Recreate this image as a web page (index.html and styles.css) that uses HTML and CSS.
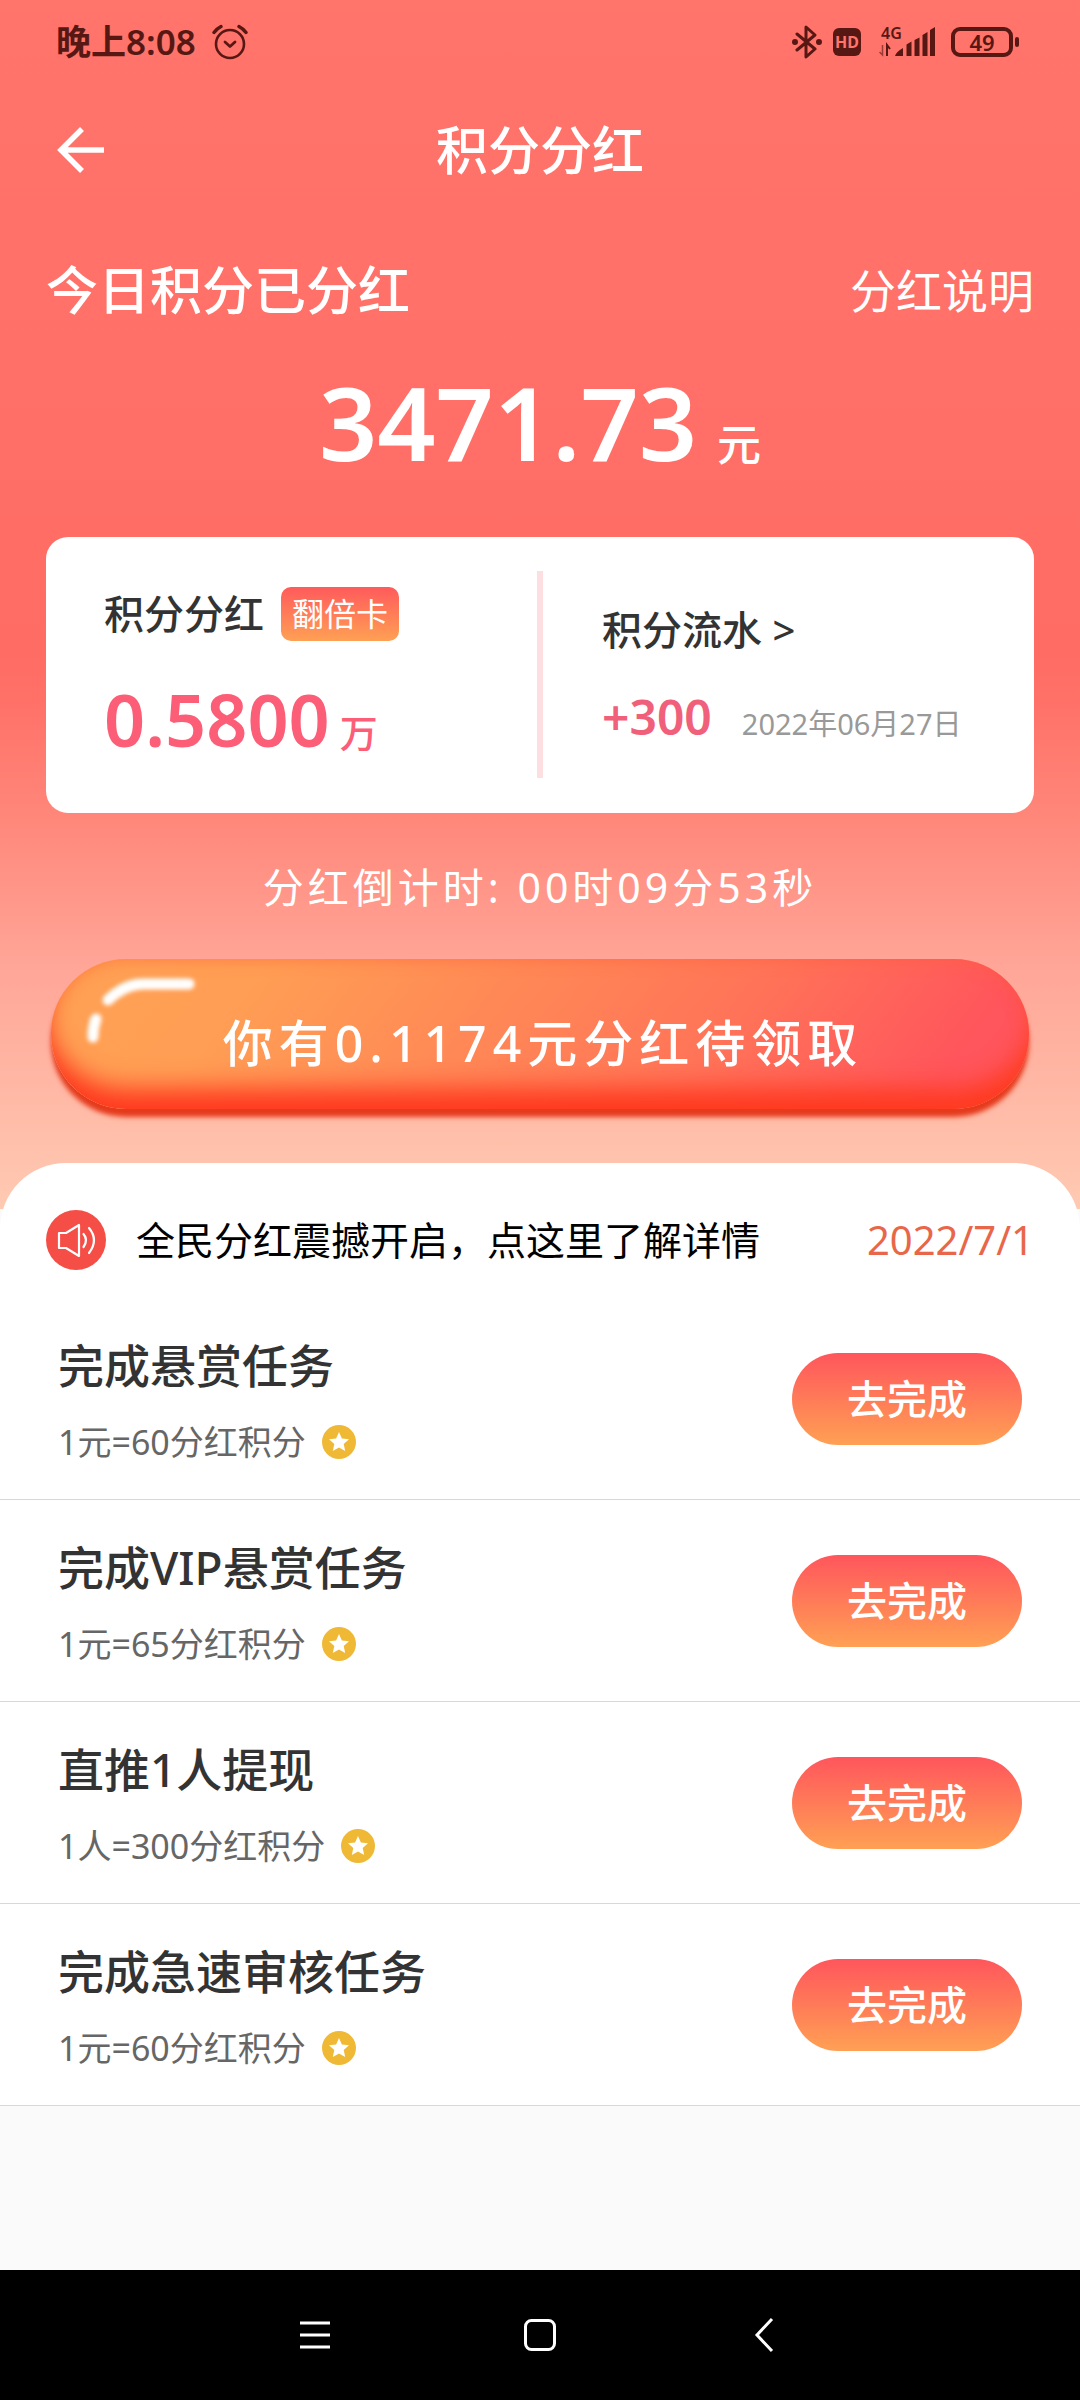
FILE: index.html
```html
<!DOCTYPE html>
<html lang="zh-CN">
<head>
<meta charset="utf-8">
<meta name="viewport" content="width=device-width, initial-scale=1">
<title>积分分红</title>
<link rel="stylesheet" href="styles.css">
</head>
<body>
<div class="page">
  <div class="hero">
    <div class="status">
      <span class="status-time">晚上8:08</span>
      <svg class="alarm" width="36" height="36" viewBox="0 0 36 36" fill="none" stroke="currentColor" stroke-linecap="round" stroke-linejoin="round">
        <circle cx="18" cy="20" r="14" stroke-width="2.6"/>
        <path d="M13 18l5 4.500 5-4.500" stroke-width="2.800"/>
        <path d="M2 8.500q3-4 7-6M34 8.500q-3-4-7-6" stroke-width="3.400"/>
      </svg>
      <div class="status-right">
        <svg width="30" height="34" viewBox="0 0 30 34" fill="none" stroke="currentColor" stroke-width="3" stroke-linejoin="round" stroke-linecap="round">
          <path d="M5 9l18 15-9 8V2l9 8L5 25"/>
          <circle cx="3" cy="17" r="1.500" fill="currentColor"/><circle cx="27" cy="17" r="1.500" fill="currentColor"/>
        </svg>
        <span class="hd">HD</span>
        <div class="signal">
          <span class="net">4G</span>
          <svg width="56" height="32" viewBox="0 0 56 32" fill="currentColor">
            <path d="M3.500 19v10l-3-3" fill="none" stroke="currentColor" stroke-width="1.500" opacity=".6"/>
            <path d="M8 30V19l3 4" fill="none" stroke="currentColor" stroke-width="2"/>
            <path d="M16 30q1-4 8-8v8zM27.500 18.500l5-3V30h-5zM35.500 14l5-2.500V30h-5zM43.500 9l5-3V30h-5zM51 4l5-3v29h-5z"/>
          </svg>
        </div>
        <span class="battery">49</span>
      </div>
    </div>

    <header class="topbar">
      <button class="back" type="button" aria-label="返回">
        <svg width="48" height="46" viewBox="0 0 48 46" fill="none" stroke="currentColor" stroke-width="5.500"><path d="M25 2L4 23l21 21M4 23h43"/></svg>
      </button>
      <h1 class="title">积分分红</h1>
    </header>

    <div class="summary">
      <h2 class="summary-title">今日积分已分红</h2>
      <a class="explain" href="#explain">分红说明</a>
    </div>
    <p class="amount"><span class="amount-num">3471.73</span><span class="amount-unit">元</span></p>

    <section class="card">
      <div class="card-left">
        <div class="card-label">积分分红<span class="badge">翻倍卡</span></div>
        <p class="points"><span class="points-num">0.5800</span><span class="points-unit">万</span></p>
      </div>
      <div class="card-right">
        <a class="card-label" href="#records">积分流水 &gt;</a>
        <p class="record"><span class="record-num">+300</span><span class="record-date">2022年06月27日</span></p>
      </div>
    </section>

    <p class="countdown">分红倒计时: 00时09分53秒</p>
    <button class="claim" type="button">
      <svg class="shine" width="110" height="68" viewBox="0 0 110 68" fill="none" stroke="#fff" stroke-width="11" stroke-linecap="round">
        <path d="M21 22q17-16 35-16h46"/><path d="M9 41q-3 8-3 18"/>
      </svg>
      你有0.1174元分红待领取
    </button>
  </div>

  <main class="sheet">
    <a class="notice" href="#notice">
      <svg width="60" height="60" viewBox="0 0 60 60" fill="none" stroke="#fff" stroke-width="2.200" stroke-linejoin="round" stroke-linecap="round">
        <circle cx="30" cy="30" r="30" fill="#f54e46" stroke="none"/>
        <path d="M13 23h7l13-8v31l-13-8h-7zM37.500 24q5 6 0 13M43 18q10 12 0 25"/>
      </svg>
      <span class="notice-text">全民分红震撼开启，点这里了解详情</span>
      <time class="notice-date">2022/7/1</time>
    </a>
    <ul class="tasks">
      <li class="task">
        <div class="task-body">
          <h3 class="task-title">完成悬赏任务</h3>
          <p class="task-sub">1元=60分红积分<svg class="star" viewBox="0 0 34 34"><circle cx="17" cy="17" r="17" fill="#efb935"/><path fill="#fff" d="M17 7l2.900 6.500 7.100.8-5.300 4.800 1.500 7L17 22.500l-6.200 3.600 1.500-7L7 14.300l7.100-.8z"/></svg></p>
        </div>
        <button class="go" type="button">去完成</button>
      </li>
      <li class="task">
        <div class="task-body">
          <h3 class="task-title">完成VIP悬赏任务</h3>
          <p class="task-sub">1元=65分红积分<svg class="star" viewBox="0 0 34 34"><circle cx="17" cy="17" r="17" fill="#efb935"/><path fill="#fff" d="M17 7l2.900 6.500 7.100.8-5.300 4.800 1.500 7L17 22.500l-6.200 3.600 1.500-7L7 14.300l7.100-.8z"/></svg></p>
        </div>
        <button class="go" type="button">去完成</button>
      </li>
      <li class="task">
        <div class="task-body">
          <h3 class="task-title">直推1人提现</h3>
          <p class="task-sub">1人=300分红积分<svg class="star" viewBox="0 0 34 34"><circle cx="17" cy="17" r="17" fill="#efb935"/><path fill="#fff" d="M17 7l2.900 6.500 7.100.8-5.300 4.800 1.500 7L17 22.500l-6.200 3.600 1.500-7L7 14.300l7.100-.8z"/></svg></p>
        </div>
        <button class="go" type="button">去完成</button>
      </li>
      <li class="task">
        <div class="task-body">
          <h3 class="task-title">完成急速审核任务</h3>
          <p class="task-sub">1元=60分红积分<svg class="star" viewBox="0 0 34 34"><circle cx="17" cy="17" r="17" fill="#efb935"/><path fill="#fff" d="M17 7l2.900 6.500 7.100.8-5.300 4.800 1.500 7L17 22.500l-6.200 3.600 1.500-7L7 14.300l7.100-.8z"/></svg></p>
        </div>
        <button class="go" type="button">去完成</button>
      </li>
    </ul>
  </main>

  <nav class="navbar">
    <button class="nav-btn" type="button" aria-label="菜单"><svg width="36" height="36" viewBox="0 0 36 36" fill="none" stroke="#fff" stroke-width="3"><path d="M3 6h30M3 18h30M3 30h30"/></svg></button>
    <button class="nav-btn" type="button" aria-label="主页"><svg width="36" height="36" viewBox="0 0 36 36" fill="none" stroke="#fff" stroke-width="3"><rect x="3.500" y="3.500" width="29" height="29" rx="6"/></svg></button>
    <button class="nav-btn" type="button" aria-label="返回"><svg width="36" height="36" viewBox="0 0 36 36" fill="none" stroke="#fff" stroke-width="3"><path d="M25 2L10 18l15 16"/></svg></button>
  </nav>
</div>
</body>
</html>
```
FILE: styles.css
```css
* { box-sizing: border-box; }

body {
  margin: 0;
  background: #fafafa;
  color: #333;
  font-family: "Noto Sans", "Noto Sans CJK SC", sans-serif;
}

h1, h2, h3, p, ul { margin: 0; padding: 0; font-weight: 500; }
button { border: 0; padding: 0; background: none; color: inherit; font: inherit; cursor: pointer; }
a { color: inherit; text-decoration: none; }
svg { display: block; flex: none; }

.page { display: flex; flex-direction: column; min-height: 100vh; }

.hero {
  padding: 0 46px 100px;
  color: #fff;
  background: linear-gradient(180deg, #ff746b 0, #ff7068 30%, #ff6c64 54%, #ff7168 58%, #ff887b 68%, #ffa698 80%, #ffcab2 100%);
}

/* status bar */
.status { display: flex; align-items: center; height: 84px; padding: 0 15px 0 10px; color: #571813; }
.status-time { font-size: 35px; font-weight: 600; line-height: 40px; }
.alarm { margin-left: 16px; }
.status-right { display: flex; align-items: center; gap: 11px; margin-left: auto; }
.hd { width: 28px; height: 28px; border-radius: 6px; background: #571813; color: #ff746b; font-size: 16px; font-weight: 700; line-height: 28px; text-align: center; }
.signal { position: relative; margin: 0 5px 0 7px; }
.net { position: absolute; left: 2px; top: 0; font-size: 16px; font-weight: 600; line-height: 14px; }
.battery { position: relative; width: 62px; height: 30px; margin-right: 6px; border: 4px solid currentColor; border-radius: 9px; font-size: 22px; font-weight: 600; line-height: 22px; text-align: center; }
.battery::after { content: ""; position: absolute; right: -10px; top: 6px; width: 4px; height: 10px; border-radius: 2px; background: currentColor; }

/* title bar */
.topbar { display: grid; grid-template-columns: 48px 1fr 48px; align-items: center; height: 132px; padding: 0 11px; }
.title { font-size: 52px; line-height: 60px; text-align: center; }

.summary { display: flex; align-items: center; justify-content: space-between; height: 148px; }
.summary-title { font-size: 52px; line-height: 60px; }
.explain { font-size: 46px; line-height: 60px; }
.amount { display: flex; align-items: baseline; justify-content: center; gap: 20px; height: 173px; line-height: 116px; }
.amount-num { font-size: 102px; font-weight: 600; }
.amount-unit { font-size: 44px; }

/* points card */
.card { display: grid; grid-template-columns: 1fr 6px 1fr; height: 276px; border-radius: 22px; background: #fff; color: #333; }
.card::before { content: ""; grid-column: 2; grid-row: 1; margin: 34px 0 35px; background: #fddfe1; }
.card-left { grid-column: 1; grid-row: 1; padding: 50px 0 0 58px; }
.card-right { grid-column: 3; padding: 66px 0 0 59px; }
.card-label { display: flex; align-items: center; gap: 17px; height: 54px; font-size: 40px; font-weight: 500; line-height: 54px; }
.badge { padding: 0 11px; border-radius: 10px; background: linear-gradient(#ff5a5c, #ffa054); color: #fff; font-size: 32px; font-weight: 400; line-height: 54px; }
.points { display: flex; align-items: baseline; gap: 10px; margin-top: 28px; color: #fb5e76; line-height: 100px; }
.points-num { font-size: 72px; font-weight: 600; }
.points-unit { font-size: 38px; }
.record { display: flex; align-items: baseline; gap: 30px; margin-top: 30px; line-height: 60px; }
.record-num { color: #f0607a; font-size: 48px; font-weight: 600; }
.record-date { color: #999; font-size: 29px; font-weight: 400; }

.countdown { margin-top: 44px; font-size: 41px; font-weight: 400; line-height: 60px; letter-spacing: 4px; text-align: center; }

/* claim button */
.claim {
  position: relative;
  display: block;
  width: calc(100% - 10px);
  height: 150px;
  margin: 42px auto 0;
  padding: 18px 0 0 6px;
  border-radius: 76px;
  background: linear-gradient(128deg, #ffa254 0, #ff9e54 20%, #ff7458 66%, #ff555c 90%);
  box-shadow: inset 0 -30px 26px -10px #ff3a20, inset 0 0 16px rgba(255, 90, 50, .5), 0 8px 5px #e53a1c;
  color: #fff;
  font-size: 50px;
  font-weight: 500;
  letter-spacing: 6px;
  line-height: 60px;
}
.shine { position: absolute; left: 36px; top: 19px; filter: blur(2px); }

/* white sheet */
.sheet { margin-top: -46px; border-radius: 66px 66px 0 0; background: #fff; }
.notice { display: flex; align-items: center; height: 135px; padding: 18px 46px 0; }
.notice-text { margin-left: 30px; color: #000; font-size: 39px; line-height: 60px; white-space: nowrap; }
.notice-date { margin-left: auto; color: #e8674a; font-size: 40px; line-height: 60px; }
.tasks { list-style: none; }
.task { display: flex; align-items: center; justify-content: space-between; height: 202px; padding: 0 58px; border-bottom: 1px solid #d8d8d8; }
.task-body { padding-top: 6px; }
.task-title { font-size: 46px; line-height: 60px; }
.task-sub { display: flex; align-items: center; gap: 16px; margin-top: 20px; color: #666; font-size: 34px; font-weight: 400; line-height: 54px; }
.star { width: 34px; height: 34px; }
.go { width: 230px; height: 92px; border-radius: 46px; background: linear-gradient(#ff565c, #ffa054); color: #fff; font-size: 40px; font-weight: 500; line-height: 60px; }

/* system navigation */
.navbar { display: flex; align-items: center; justify-content: center; height: 130px; margin-top: auto; background: #000; }
.nav-btn { display: grid; place-items: center; width: 225px; height: 130px; }
```
